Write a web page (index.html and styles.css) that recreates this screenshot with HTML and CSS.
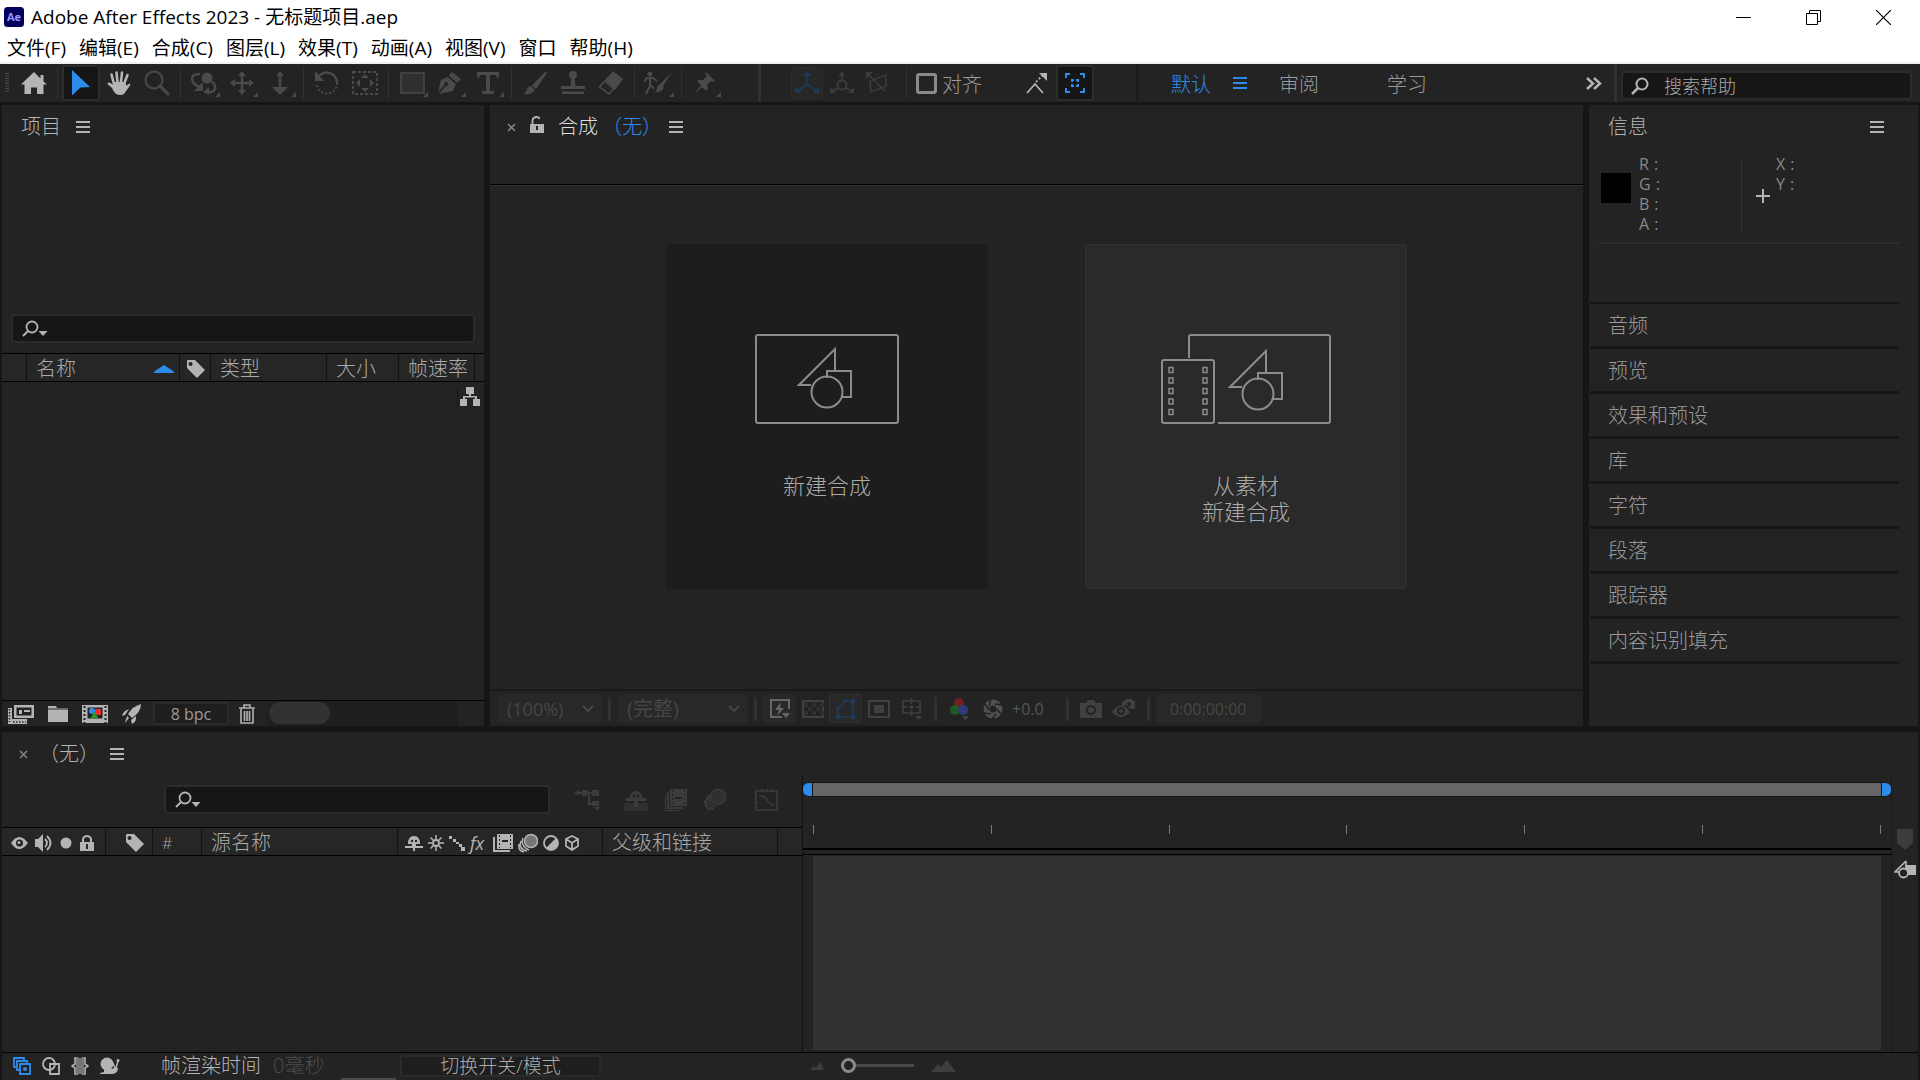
FILE: index.html
```html
<!DOCTYPE html>
<html lang="zh-CN">
<head>
<meta charset="utf-8">
<title>Adobe After Effects 2023 - 无标题项目.aep</title>
<link rel="stylesheet" href="styles.css">
</head>
<body>
<svg class="defs" aria-hidden="true">
  <symbol id="i-menu" viewBox="0 0 14 12"><path d="M0 1h14M0 6h14M0 11h14" stroke="currentColor" stroke-width="2" fill="none"/></symbol>
  <symbol id="i-corner" viewBox="0 0 5 5"><path d="M5 0v5H0z" fill="currentColor"/></symbol>
  <symbol id="i-close" viewBox="0 0 9 9"><path d="M1 1l7 7M8 1L1 8" stroke="currentColor" stroke-width="1.4"/></symbol>
  <symbol id="i-find" viewBox="0 0 26 18"><circle cx="10" cy="7" r="5.500" fill="none" stroke="currentColor" stroke-width="1.8"/><path d="M6 11L1 16" stroke="currentColor" stroke-width="2"/><path d="M16.500 11h9l-4.500 5z" fill="currentColor"/></symbol>
  <symbol id="i-tag" viewBox="0 0 20 20"><path fill-rule="evenodd" d="M1 2q0-1 1-1h7l10 10-8 8L1 9zM4.500 3a2 2 0 1 0 .1 0z" fill="currentColor"/></symbol>
  <symbol id="i-chev" viewBox="0 0 12 8"><path d="M1 1l5 5 5-5" stroke="currentColor" stroke-width="2" fill="none"/></symbol>
  <symbol id="i-shapes" viewBox="0 0 56 62"><path d="M14 38H2L38 2v22M30 31v-7h24v26h-10" fill="none" stroke="currentColor" stroke-width="2"/><circle cx="30" cy="45" r="15.500" fill="none" stroke="currentColor" stroke-width="2"/></symbol>
</svg>
<div class="app">
  <header class="chrome">
    <div class="titlebar">
      <svg class="logo" viewBox="0 0 20 20"><rect width="20" height="20" rx="3.500" fill="#00005b"/><text x="10" y="14" text-anchor="middle" font-family="Open Sans, sans-serif" font-weight="700" font-size="11" fill="#9999ff">Ae</text></svg>
      <h1>Adobe After Effects 2023 - 无标题项目.aep</h1>
      <div class="winbtns">
        <button aria-label="最小化"><svg width="15" height="15"><path d="M0 7.500h15" stroke="#000"/></svg></button>
        <button aria-label="还原"><svg width="15" height="15"><path d="M.5 3.500h11v11H.5zM3.500 3.500v-3h11v11h-3" fill="none" stroke="#000"/></svg></button>
        <button aria-label="关闭"><svg width="15" height="15"><path d="M0 0l15 15M15 0L0 15" stroke="#000" stroke-width="1.200"/></svg></button>
      </div>
    </div>
    <nav class="menubar">
      <button>文件(F)</button><button>编辑(E)</button><button>合成(C)</button><button>图层(L)</button><button>效果(T)</button><button>动画(A)</button><button>视图(V)</button><button>窗口</button><button>帮助(H)</button>
    </nav>
  </header>

  <div class="toolbar">
    <svg class="grip" viewBox="0 0 4 20"><path d="M2 0v20" stroke="#4a4a4a" stroke-width="4" stroke-dasharray="1 1.500"/></svg>
    <button class="tool lit" aria-label="主页"><svg width="26" height="24"><path d="M13 1L0 13.500h3.500V23h6.500v-6.500h6V23h6.500v-9.500H26L22.500 10.500V4h-3v3.500z" fill="currentColor"/></svg></button>
    <i class="sep"></i>
    <button class="tool on" aria-label="选取工具"><svg width="20" height="26"><path d="M1 0l18 17-9.500.5L1 25.500z" fill="#2d8ceb"/></svg></button>
    <button class="tool lit" aria-label="手形工具"><svg width="24" height="26"><path d="M7 14L4.500 4.500M10.500 12L9.500 2.500M14 12l1-9.500M17 14l3.500-9" stroke="currentColor" stroke-width="2.600" stroke-linecap="round"/><path d="M6 12h12l1.500 3.500 3-2q1.500.5.5 2L17 24q-4 2-8 0-3-3-4-6L.5 14q0-2 2-1.500L6.500 15z" fill="currentColor"/></svg></button>
    <button class="tool" aria-label="缩放工具"><svg width="26" height="26"><circle cx="10" cy="10" r="8.500" fill="none" stroke="currentColor" stroke-width="2"/><path d="M16 16l8 8" stroke="currentColor" stroke-width="3" stroke-linecap="round"/></svg></button>
    <i class="sep"></i>
    <button class="tool" aria-label="绕光标旋转工具"><svg width="28" height="24"><circle cx="17" cy="7" r="5.500" fill="currentColor"/><path d="M10 3Q2 3 2 8q1 6 8 8M21 10q5 3 4 8-2 4-8 3" fill="none" stroke="currentColor" stroke-width="2.500"/><path d="M13 11v9H4zM19 16l-6 5 6 3z" fill="currentColor"/></svg><svg class="corner"><use href="#i-corner"/></svg></button>
    <button class="tool" aria-label="平移工具"><svg width="24" height="24"><path d="M12 3v18M3 12h18" stroke="currentColor" stroke-width="2.400"/><path d="M12 0l4 5H8zM12 24l4-5H8zM0 12l5-4v8zM24 12l-5-4v8z" fill="currentColor"/></svg><svg class="corner"><use href="#i-corner"/></svg></button>
    <button class="tool" aria-label="推拉工具"><svg width="18" height="24"><path d="M9 2v18" stroke="currentColor" stroke-width="2.600"/><path d="M9 0l4 5H5zM9 24l8-8H1z" fill="currentColor"/></svg><svg class="corner"><use href="#i-corner"/></svg></button>
    <i class="sep"></i>
    <button class="tool" aria-label="旋转工具"><svg width="26" height="26"><path d="M4 7q7-7 14-3 5 3 5 9" fill="none" stroke="currentColor" stroke-width="2.500"/><path d="M23 13a10 10 0 0 1-20 1" fill="none" stroke="currentColor" stroke-width="2" stroke-dasharray="2 2"/><path d="M1 1v10h9z" fill="currentColor"/></svg></button>
    <button class="tool" aria-label="锚点工具"><svg width="26" height="24"><rect x="1" y="1" width="24" height="22" fill="none" stroke="currentColor" stroke-width="2" stroke-dasharray="3 2"/><path d="M13 3l4 4H9zM13 21l4-4H9zM4 12l4-4v8zM22 12l-4-4v8z" fill="currentColor"/></svg></button>
    <i class="sep"></i>
    <button class="tool" aria-label="矩形工具"><svg width="25" height="22"><rect x="1" y="1" width="23" height="20" fill="#303030" stroke="currentColor" stroke-width="1.500"/></svg><svg class="corner"><use href="#i-corner"/></svg></button>
    <button class="tool" aria-label="钢笔工具"><svg width="26" height="24"><path d="M15 1l9 7-3.500 4-9-7.500z" fill="currentColor"/><path fill-rule="evenodd" d="M10.500 6l8.500 7-3 7L2 23l7-8a2 2 0 1 0-1.500-1L1 21 4 9z" fill="currentColor"/></svg><svg class="corner"><use href="#i-corner"/></svg></button>
    <button class="tool" aria-label="横排文字工具"><svg width="22" height="22"><path d="M0 0h22v6h-2l-1-3h-6v16h4v3H5v-3h4V3H3L2 6H0z" fill="currentColor"/></svg><svg class="corner"><use href="#i-corner"/></svg></button>
    <i class="sep"></i>
    <button class="tool" aria-label="画笔工具"><svg width="26" height="24"><path d="M24.500.5q1 0 0 2L14 18l-4-3.500L23 1q1-1 1.500-.5zM9 15l4 4q-2 5-12 4 3-1 4-5 1-3 4-3z" fill="currentColor"/></svg></button>
    <button class="tool" aria-label="仿制图章工具"><svg width="26" height="24"><circle cx="13" cy="4" r="4" fill="currentColor"/><path d="M11.500 6h3l1 9H25v3H1v-3h9.500zM2 20.500h22V23H2z" fill="currentColor"/></svg></button>
    <button class="tool" aria-label="橡皮擦工具"><svg width="26" height="24"><path d="M15 0l10 8-8 11L7 9z" fill="currentColor"/><path d="M7 10l8.500 8-4.500 5L1.500 16z" fill="none" stroke="currentColor" stroke-width="1.600"/></svg></button>
    <i class="sep"></i>
    <button class="tool" aria-label="Roto 笔刷工具"><svg width="28" height="24"><circle cx="6" cy="3" r="2.500" fill="currentColor"/><path d="M0 11l3-4h6l4 3M6 7v8l-4 8M7 14l3 4" fill="none" stroke="currentColor" stroke-width="2"/><path d="M28 1L19 15l-3-2zM16 13l4 3q-2 6-9 5 2-1 2-5z" fill="currentColor"/></svg><svg class="corner"><use href="#i-corner"/></svg></button>
    <i class="sep"></i>
    <button class="tool" aria-label="人偶位置控点工具"><svg width="24" height="24"><path d="M13 1l9 9-2 1-2-1-4 4q2 4-1 6l-4-4-8 7 7-9-4-4q3-2 6-1l4-4-2-2z" fill="currentColor"/></svg><svg class="corner"><use href="#i-corner"/></svg></button>
    <i class="sep wide first"></i>
    <div class="axes">
      <button class="tool axis boxed" aria-label="本地轴模式"><svg width="26" height="24"><path d="M13 2v11L2 21M13 13l11 8" fill="none" stroke="currentColor" stroke-width="1.800"/><path d="M13 0l4 5H9zM1 16l6 6H1zM25 16l-6 6h6z" fill="currentColor"/></svg></button>
      <button class="tool axis" aria-label="世界轴模式"><svg width="26" height="24"><circle cx="13" cy="14" r="4.500" fill="none" stroke="currentColor" stroke-width="2"/><path d="M13 2v7M9 17l-7 4M17 17l7 4" stroke="currentColor" stroke-width="1.800"/><path d="M13 0l3.500 5h-7zM1 16l6 6H1zM25 16l-6 6h6z" fill="currentColor"/></svg></button>
      <button class="tool axis" aria-label="视图轴模式"><svg width="22" height="22"><path d="M4 9l16-6v11L5 20z M2 2l17 17" fill="none" stroke="currentColor" stroke-width="1.500"/><path d="M0 0h7L0 7z" fill="currentColor"/></svg></button>
    </div>
    <i class="sep"></i>
    <label class="snap"><input type="checkbox"><span>对齐</span></label>
    <button class="tool lit snapedge" aria-label="对齐选项"><svg width="22" height="22"><path d="M1 21l8-9 8 9" fill="none" stroke="currentColor" stroke-width="1.800"/><path d="M10 10l7-7" stroke="currentColor" stroke-width="1.800" stroke-dasharray="2 2"/><path d="M13 1h8v8z" fill="currentColor"/></svg></button>
    <button class="tool on" aria-label="折叠变换对齐"><svg width="20" height="20"><path d="M1 5V1h4M15 1h4v4M19 15v4h-4M5 19H1v-4M7 9V7h2M11 7h2v2M13 11v2h-2M9 13H7v-2" fill="none" stroke="#2d8ceb" stroke-width="2"/></svg></button>
    <i class="sep dark"></i>
    <nav class="spaces">
      <button class="active">默认</button><button class="active spacemenu" aria-label="工作区菜单"><svg class="ham"><use href="#i-menu"/></svg></button>
      <button>审阅</button><button class="learn">学习</button>
    </nav>
    <button class="more" aria-label="更多"><svg width="16" height="13"><path d="M1 1l6 5.500L1 12M8 1l6 5.500L8 12" fill="none" stroke="currentColor" stroke-width="2.500"/></svg></button>
    <i class="sep wide"></i>
    <label class="field help"><svg width="18" height="18"><circle cx="11" cy="7" r="5.500" fill="none" stroke="currentColor" stroke-width="2"/><path d="M7 11l-6 6" stroke="currentColor" stroke-width="2.500"/></svg><input type="text" placeholder="搜索帮助" aria-label="搜索帮助"></label>
  </div>

  <main class="workspace">
    <section class="panel project">
      <div class="tabs"><h2>项目</h2><button aria-label="面板菜单"><svg class="ham"><use href="#i-menu"/></svg></button></div>
      <div class="preview"></div>
      <label class="field find"><svg width="26" height="18"><use href="#i-find"/></svg><input type="text" aria-label="搜索项目"></label>
      <table class="cols">
        <tr><th class="c-handle"></th><th class="c-name"><span>名称<svg width="20" height="8"><path d="M0 8q0-1 1-2l9-6 9 6q1 1 1 2z" fill="#2d8ceb"/></svg></span></th><th class="c-tag"><svg width="20" height="20"><use href="#i-tag"/></svg></th><th class="c-type">类型</th><th class="c-size">大小</th><th class="c-rate">帧速率</th><th></th></tr>
      </table>
      <div class="bin"><button aria-label="项目流程图"><svg width="20" height="19"><path d="M6 0h8v7h-3v2h6v3h3v7h-7v-7h2v-1.500H5V12h2v7H0v-7h3V9h6V7H6z" fill="currentColor"/></svg></button></div>
      <div class="binbar">
        <button aria-label="解释素材"><svg width="26" height="20"><path fill-rule="evenodd" d="M6 1h20v13H6zM8.500 3.500v8h15v-8z" fill="currentColor"/><path d="M11 6h3v4h-3zM16 6h6v2h-6zM0 4h4v11h15v5H0z" fill="currentColor"/><path d="M1.500 5v13M5 18h13" stroke="#232323" stroke-dasharray="1.500 1.500" stroke-width="1.500"/></svg></button>
        <button aria-label="新建文件夹"><svg width="20" height="18"><path d="M0 1h8l1 2h11v14H0z" fill="currentColor"/><path d="M0 4h20" stroke="#232323"/></svg></button>
        <button aria-label="新建合成"><svg width="26" height="20"><path d="M0 1h26v18H0z" fill="currentColor"/><path d="M2.500 2v17M23.500 2v17" stroke="#232323" stroke-width="2" stroke-dasharray="2 2"/><path d="M5.500 3.500h15v11h-15z" fill="#232323"/><circle cx="10" cy="7" r="3" fill="#2d8ceb"/><path d="M13 5h6v6h-6z" fill="#f03030"/><path d="M12.500 8l4 6h-8z" fill="#22a020"/></svg></button>
        <button aria-label="项目设置"><svg width="20" height="20"><path d="M19 0q0 8-9 14l-4-4Q11 2 19 0zM7 5l-4 6-3 1q1-5 7-7zM14 12q1 5-4 8l-1-4zM5 12l2 2-4 5z" fill="currentColor"/></svg></button>
        <button class="bpc">8 bpc</button>
        <button aria-label="删除"><svg width="16" height="20"><path d="M0 4h16M5 4V1h6v3M2 5v14h12V5M5.500 7v10M8 7v10M10.500 7v10" fill="none" stroke="currentColor" stroke-width="1.600"/></svg></button>
        <div class="hscroll"><i></i></div>
      </div>
    </section>

    <section class="panel comp">
      <div class="tabs"><button class="x" aria-label="关闭"><svg width="9" height="9"><use href="#i-close"/></svg></button><button class="lock" aria-label="锁定"><svg width="14" height="18"><path d="M2.500 9V4q1-3 4-3 2.500 0 3 2" fill="none" stroke="currentColor" stroke-width="1.800"/><path fill-rule="evenodd" d="M0 8h14v9H0zM6 10v4h2v-4z" fill="currentColor"/></svg></button><h2>合成<b>（无）</b></h2><button aria-label="面板菜单"><svg class="ham"><use href="#i-menu"/></svg></button></div>
      <div class="stage">
        <button class="card"><svg width="144" height="90" class="art"><rect x="1" y="1" width="142" height="88" rx="2" fill="none" stroke="currentColor" stroke-width="2"/><svg x="42" y="13" width="56" height="62"><use href="#i-shapes"/></svg></svg><span>新建合成</span></button>
        <button class="card soft"><svg width="170" height="90" class="art"><path d="M28 24V3q0-2 2-2h137q2 0 2 2v84q0 2-2 2H57" fill="none" stroke="currentColor" stroke-width="2"/><rect x="1" y="26" width="52" height="63" rx="2" fill="none" stroke="currentColor" stroke-width="2"/><path d="M8 33.500h4v5H8zM8 44h4v5H8zM8 54.500h4v5H8zM8 65h4v5H8zM8 75.500h4v5H8zM42 33.500h4v5h-4zM42 44h4v5h-4zM42 54.500h4v5h-4zM42 65h4v5h-4zM42 75.500h4v5h-4z" fill="none" stroke="currentColor" stroke-width="1.500"/><svg x="67" y="15" width="56" height="62"><use href="#i-shapes"/></svg></svg><span>从素材<br>新建合成</span></button>
      </div>
      <div class="viewbar">
        <div class="pick zoom"><select aria-label="放大率"><option>(100%)</option></select><svg width="12" height="8"><use href="#i-chev"/></svg></div>
        <i class="bar"></i>
        <div class="pick res"><select aria-label="分辨率"><option>(完整)</option></select><svg width="12" height="8"><use href="#i-chev"/></svg></div>
        <i class="bar"></i>
        <button class="vb fill bright" aria-label="快速预览"><svg width="22" height="22"><path d="M20 11V2H2v17h11" fill="none" stroke="currentColor" stroke-width="2"/><path d="M12 4l-6 8h4l-2 6 7-8h-4zM13 15h8l-4 5z" fill="currentColor"/></svg></button>
        <button class="vb" aria-label="透明网格"><svg width="22" height="18"><rect x="1" y="1" width="20" height="16" fill="none" stroke="currentColor" stroke-width="2"/><path d="M2 5h20M2 13h20M6 9h14" stroke="#303030" stroke-width="4" stroke-dasharray="4 4"/></svg></button>
        <button class="vb fill blue" aria-label="蒙版可见性"><svg width="22" height="20"><path d="M3 18V9l7-7h8v16z" fill="none" stroke="currentColor" stroke-width="1.500"/><path d="M1 16h4v4H1zM16 16h4v4h-4zM16 0h4v4h-4zM8 0h4v3H8zM1 8h3v3H1z" fill="currentColor"/></svg></button>
        <button class="vb" aria-label="目标区域"><svg width="22" height="18"><rect x="1" y="1" width="20" height="16" fill="none" stroke="currentColor" stroke-width="2"/><path d="M6 5h10v8H6z" fill="currentColor"/></svg></button>
        <button class="vb" aria-label="网格和参考线"><svg width="22" height="22"><path d="M2 3h17v12H2zM0 9h6M15 9h6M10.500 0v6M10.500 12v6M8 9h5M10.500 7v4" fill="none" stroke="currentColor" stroke-width="1.600"/><path d="M14 18h7l-3.500 4z" fill="currentColor"/></svg></button>
        <i class="bar"></i>
        <button class="vb rgb" aria-label="显示通道"><svg width="20" height="22"><circle cx="9" cy="5" r="5" fill="#702020"/><circle cx="5" cy="12" r="5" fill="#205a24"/><circle cx="13" cy="12" r="5" fill="#303a78"/><path d="M12 18h7l-3.500 4z" fill="#444"/></svg></button>
        <button class="vb shutter" aria-label="重置曝光度"><svg width="20" height="20"><circle cx="10" cy="10" r="6.500" fill="none" stroke="currentColor" stroke-width="6"/><path d="M8 0l-2 7M19 6l-7-1M18 15l-4-5M9 20l4-5M1 14l7 1M2 5l4 6" stroke="#232323" stroke-width="1.500"/></svg></button>
        <span class="expo">+0.0</span>
        <i class="bar"></i>
        <button class="vb" aria-label="拍摄快照"><svg width="22" height="18"><path fill-rule="evenodd" d="M0 3h6l2-3h6l2 3h6v15H0zM11 5a5 5 0 1 0 .1 0z" fill="currentColor"/><circle cx="11" cy="10" r="3" fill="currentColor"/></svg></button>
        <button class="vb" aria-label="显示快照"><svg width="24" height="20"><path d="M0 13q9-13 18 0-9 10-18 0z" fill="currentColor"/><circle cx="9" cy="12" r="4" fill="#232323"/><circle cx="9" cy="12" r="2" fill="currentColor"/><path d="M10 2h3l1-2h6l1 2h2v8h-4l-5-4-4 1z" fill="currentColor"/><circle cx="17" cy="5" r="2" fill="#232323"/></svg></button>
        <i class="bar"></i>
        <button class="time">0:00:00:00</button>
      </div>
    </section>

    <aside class="panel info">
      <div class="tabs"><h2>信息</h2><button aria-label="面板菜单"><svg class="ham"><use href="#i-menu"/></svg></button></div>
      <div class="readout">
        <i class="swatch"></i>
        <div class="rgba"><p><span>R</span><span>:</span></p><p><span>G</span><span>:</span></p><p><span>B</span><span>:</span></p><p><span>A</span><span>:</span></p></div>
        <div class="pos"><svg width="14" height="14"><path d="M0 7h14M7 0v14" stroke="currentColor" stroke-width="2"/></svg><div><p><span>X</span><span>:</span></p><p><span>Y</span><span>:</span></p></div></div>
      </div>
      <nav class="stack"><button>音频</button><button>预览</button><button>效果和预设</button><button>库</button><button>字符</button><button>段落</button><button>跟踪器</button><button>内容识别填充</button></nav>
    </aside>

    <section class="panel timeline">
      <div class="tabs"><button class="x" aria-label="关闭"><svg width="9" height="9"><use href="#i-close"/></svg></button><h2>（无）</h2><button aria-label="面板菜单"><svg class="ham"><use href="#i-menu"/></svg></button></div>
      <div class="tracks">
        <div class="layers">
          <div class="layertools">
            <label class="field find"><svg width="26" height="18"><use href="#i-find"/></svg><input type="text" aria-label="搜索图层"></label>
            <button class="mini" aria-label="合成微型流程图"><svg width="26" height="22"><path d="M0 4l5-3v2h3V1h6v2h4V1h7v6h-7V5h-2v9h2v-2h7v5h-7v-1h-4V5h-1v2H8V5H5v2zM20 18h6l-3 4z" fill="currentColor"/></svg></button>
            <button aria-label="隐藏消隐图层"><svg width="24" height="22"><path d="M0 14h24v8H0z" fill="#303030"/><path d="M6 9q0-7 6-7t6 7h4v3h-8v6h-4v-6H2V9z" fill="currentColor"/><circle cx="10" cy="7" r="1.500" fill="#232323"/><circle cx="14" cy="7" r="1.500" fill="#232323"/></svg></button>
            <button aria-label="帧混合"><svg width="22" height="22"><path d="M5 0h17v17H5zM2 3h2v15h14v2H2zM0 6h1v15h13v1H0z" fill="currentColor"/><path d="M7.500 1v16M19.500 1v16" stroke="#232323" stroke-dasharray="2 2"/><path d="M10 8h7v2h-7z" fill="#232323"/></svg></button>
            <button aria-label="运动模糊"><svg width="22" height="22"><circle cx="14" cy="8" r="7.500" fill="#303030" stroke="currentColor" stroke-width="1.500"/><path d="M5 5q-3 9 7 13M3 8q-3 9 7 12M1 11q-1 8 6 10" fill="none" stroke="currentColor" stroke-width="1.500"/></svg></button>
            <button class="graph" aria-label="图表编辑器"><svg width="24" height="22"><path d="M2 2h21v19H2z" fill="none" stroke="currentColor" stroke-width="1.600"/><path d="M5 7h2q4 0 6 4t7 5M8 0v3M13 0v3M18 0v3M0 9h3M0 14h3" fill="none" stroke="currentColor" stroke-width="1.600"/></svg></button>
          </div>
          <table class="cols layercols">
            <tr><th class="l-av"><span><svg width="17" height="14"><path d="M0 7q8-12 17 0-9 12-17 0z" fill="currentColor"/><circle cx="8.500" cy="7" r="3.500" fill="#232323"/><circle cx="8" cy="6.500" r="1.500" fill="currentColor"/></svg><svg width="18" height="18"><path d="M0 5h3l5-5v18l-5-5H0z" fill="currentColor"/><path d="M10 5q4 4 0 8M12 2q7 7 0 14" fill="none" stroke="currentColor" stroke-width="1.800"/></svg><svg width="13" height="12"><circle cx="6" cy="6" r="5.500" fill="currentColor"/></svg><svg width="14" height="16"><path d="M3 8V4q1-3 4-3t4 3v4" fill="none" stroke="currentColor" stroke-width="2"/><path fill-rule="evenodd" d="M0 7h14v9H0zM6 9v5h2V9z" fill="currentColor"/></svg></span></th>
            <th class="l-tag"><svg width="20" height="20"><use href="#i-tag"/></svg></th><th class="l-num">#</th><th class="l-src">源名称</th>
            <th class="l-sw"><span>
              <svg width="18" height="16"><path d="M3 9q0-8 6-8t6 8h-4v2h7v2h-8v3H8v-3H0v-2h7V9z" fill="currentColor"/><circle cx="7" cy="6" r="1.200" fill="#232323"/><circle cx="11" cy="6" r="1.200" fill="#232323"/></svg>
              <svg width="16" height="16"><circle cx="8" cy="8" r="3" fill="none" stroke="currentColor" stroke-width="1.800"/><path d="M8 0v4M8 12v4M0 8h4M12 8h4M2.500 2.500l3 3M10.500 10.500l3 3M13.500 2.500l-3 3M5.500 10.500l-3 3" stroke="currentColor" stroke-width="1.500"/></svg>
              <svg width="16" height="16"><path d="M0 1h3v3H0zM4 4h3v3H4zM7 7h3v2H7zM10 9h3v3h-3zM12 12h4v4h-4z" fill="currentColor"/></svg>
              <em>fx</em>
              <svg width="20" height="18"><path d="M4 0h16v15H4zM0 3h2v13h15v2H0z" fill="currentColor"/><path d="M6.500 1v13M17.500 1v13" stroke="#232323" stroke-dasharray="2 2"/><path d="M9 6h6v2H9z" fill="#232323"/></svg>
              <svg width="20" height="20"><circle cx="13" cy="8" r="6.500" fill="#777" stroke="currentColor" stroke-width="1.500"/><path d="M5 5q-3 8 6 12M3 8q-3 8 6 10M1 11q-1 7 5 8" fill="none" stroke="currentColor" stroke-width="1.500"/></svg>
              <svg width="16" height="16"><circle cx="8" cy="8" r="7" fill="none" stroke="currentColor" stroke-width="1.800"/><path d="M13 3A7 7 0 0 1 3 13z" fill="currentColor"/></svg>
              <svg width="16" height="16"><path d="M8 1l6 3v7l-6 4-6-4V4zM2 4l6 4 6-4M8 8v7" fill="none" stroke="currentColor" stroke-width="1.800"/></svg></span></th>
            <th class="l-parent">父级和链接</th><th></th></tr>
          </table>
          <div class="layerlist"></div>
        </div>
        <div class="ruler">
          <div class="workarea"><i></i></div>
          <div class="ticks"><div class="scale"><i></i><i></i><i></i><i></i><i></i><i></i><i></i></div></div>
          <div class="canvas"><i></i></div>
        </div>
        <div class="side"><svg width="16" height="21"><path d="M0 0h16v14l-8 7-8-7z" fill="#3c3c3c"/></svg><svg width="22" height="19"><path d="M11 5h11v10h-8z" fill="currentColor"/><path d="M12 1v9M12 1L1 12h5" fill="none" stroke="currentColor" stroke-width="1.600"/><circle cx="9.500" cy="13" r="4.500" fill="#232323" stroke="currentColor" stroke-width="1.800"/></svg></div>
      </div>
      <div class="status">
        <div class="toggles">
          <button class="blue" aria-label="图层开关"><svg width="18" height="18"><path d="M11 4V1H1v9h3M14 7V4H4v9h3M7 7h10v10H7z" fill="none" stroke="currentColor" stroke-width="1.800"/><circle cx="12" cy="12" r="2" fill="currentColor"/></svg></button>
          <button aria-label="转换控制"><svg width="18" height="18"><circle cx="7" cy="7" r="6" fill="none" stroke="currentColor" stroke-width="1.800"/><path d="M8 7h9v10H8z" fill="none" stroke="currentColor" stroke-width="1.800"/></svg></button>
          <button aria-label="入点出点"><svg width="18" height="18"><path d="M7 1H4v6L1 9l3 2v6h3M11 1h3v6l3 2-3 2v6h-3" fill="none" stroke="currentColor" stroke-width="1.600"/><path d="M5 1h8v16H5z" fill="#777"/></svg></button>
          <button aria-label="渲染时间"><svg width="20" height="18"><circle cx="7" cy="7" r="6.500" fill="currentColor"/><path d="M4 12h8l3-2 3 1q0 5-5 6H0v-1l4-1z" fill="currentColor"/><path d="M16 11l2-7M15 11l-2-5" stroke="currentColor" stroke-width="1.500"/><circle cx="18" cy="3.500" r="1.500" fill="currentColor"/></svg></button>
        </div>
        <span class="rt">帧渲染时间</span><span class="ms">0毫秒</span>
        <button class="switch">切换开关/模式</button>
        <div class="zoomer"><svg width="14" height="8"><path d="M0 8l4-4 2 2 4-6 4 8z" fill="#3e3e3e"/></svg><input type="range" min="0" max="100" value="0" aria-label="时间缩放"><svg width="26" height="12"><path d="M0 12l7-8 3 3L16 0l9 12z" fill="#3e3e3e"/></svg></div>
      </div>
      <i class="thumb"></i>
    </section>
  </main>
</div>
</body>
</html>
```
FILE: styles.css
```css
* { box-sizing: border-box; }
body {
  margin: 0;
  background: #161616;
  color: #b4b4b4;
  font: 300 20px/24px "Open Sans", "Noto Sans CJK SC", sans-serif;
}
button, input, select { font: inherit; color: inherit; }
button { padding: 0; border: 0; background: none; display: flex; align-items: center; justify-content: center; }
svg { display: block; flex: none; }
h1, h2, p { margin: 0; font-size: inherit; font-weight: inherit; }
i, em, b { font-weight: inherit; }
.defs { position: absolute; width: 0; height: 0; }
.app { display: flex; flex-direction: column; min-height: 100vh; }

/* window title and menus */
.chrome { background: #fff; color: #000; border-bottom: 2px solid #f0f0f0; font-size: 19px; font-weight: 400; }
.titlebar { display: flex; align-items: center; height: 34px; padding: 0 2px 0 4px; }
.logo { width: 20px; height: 20px; margin-right: 7px; }
.winbtns { display: flex; margin-left: auto; }
.winbtns button { width: 70px; height: 34px; }
.menubar { display: flex; gap: 13px; height: 28px; padding: 0 7px; }

/* toolbar */
.toolbar { display: flex; align-items: center; height: 38px; padding: 0 8px 0 5px; background: #232323; color: #4a4a4a; }
.grip { width: 4px; height: 20px; margin-right: 6px; }
.tool { position: relative; width: 38px; height: 36px; flex: none; border-radius: 3px; }
.tool.lit { color: #b4b4b4; }
.tool.on { background: #161616; border: 2px solid #2c2c2c; }
.corner { position: absolute; right: 3px; bottom: 4px; width: 5px; height: 5px; }
.sep { flex: none; width: 1px; height: 32px; margin: 0 4px; background: #303030; }
.sep.wide { width: 3px; height: 38px; }
.sep.first { margin-left: 34px; }
.sep.dark { width: 2px; height: 38px; margin: 0 4px 0 42px; background: #1b1b1b; }
.axes { display: flex; gap: 3px; margin-left: 26px; margin-right: 9px; }
.axis { width: 32px; height: 32px; color: #3c3c3c; }
.axis.boxed { background: #272727; border: 1px solid #2c2c2c; color: #1d3b5a; }
.snap { display: flex; align-items: center; gap: 5px; margin-left: 5px; color: #9a9a9a; }
.snap span { padding-top: 3px; }
.snap input { appearance: none; width: 21px; height: 21px; margin: 0; border: 3px solid #8a8a8a; border-radius: 3px; }
.snapedge { margin-left: 36px; }
.spaces { display: flex; align-items: center; flex: 1; color: #9a9a9a; margin-left: 29px; padding-top: 3px; }
.spaces .active { color: #2d8ceb; }
.spaces .spacemenu { margin: 0 32px 3px 22px; }
.spaces .learn { margin-left: 68px; }
.ham { width: 14px; height: 12px; }
.more { margin-right: 8px; color: #b4b4b4; }
.field { display: flex; align-items: center; background: #161616; border: 2px solid #2b2b2b; border-radius: 4px; height: 29px; }
.field input { flex: 1; min-width: 0; border: 0; padding: 0; outline: 0; background: none; height: 24px; }
.help { width: 291px; margin-top: 5px; padding-left: 8px; gap: 15px; color: #b4b4b4; font-size: 18px; }
.help input::placeholder { color: #aaa; opacity: 1; }

/* panels */
.workspace {
  flex: 1; display: grid; gap: 6px; padding: 3px 2px 0;
  grid-template-columns: 482px minmax(0, 1fr) 329px;
  grid-template-rows: minmax(560px, 621fr) minmax(300px, 348fr);
}
.panel { display: flex; flex-direction: column; background: #232323; min-width: 0; }
.tabs { display: flex; align-items: center; flex: none; height: 44px; }
.tabs .x { color: #8a8a8a; }

.project .tabs { padding-left: 19px; gap: 15px; }
.project .preview { height: 165px; }
.project .field { margin: 0 9px; padding-left: 9px; }
.cols { width: 100%; margin-top: 10px; height: 29px; table-layout: fixed; border-collapse: collapse; border-top: 1px solid #000; border-bottom: 1px solid #000; background: #262626; color: #aaa; }
.cols th { padding: 2px 0 0 9px; font-weight: inherit; text-align: left; white-space: nowrap; box-shadow: inset -1px 0 #121212; }
.cols th:last-child { box-shadow: none; padding: 0; }
.cols span { display: flex; align-items: center; }
.c-handle { width: 25px; }
.c-name { width: 153px; }
.c-name span { justify-content: space-between; padding-right: 6px; }
.cols .c-tag { width: 31px; padding-left: 6px; color: #b4b4b4; }
.c-type { width: 116px; }
.c-size { width: 72px; }
.c-rate { width: 76px; }
.bin { flex: 1; display: flex; justify-content: flex-end; align-items: flex-start; padding-top: 5px; }
.bin button { padding: 0 4px 0 2px; border-left: 1px solid #161616; }
.binbar { display: flex; align-items: center; height: 26px; border-top: 1px solid #000; padding-left: 6px; }
.binbar button { margin-right: 14px; }
.binbar .bpc { width: 76px; height: 23px; margin: 0 10px 0 -3px; border: 2px solid #2a2a2a; border-radius: 3px; background: #1e1e1e; color: #9a9a9a; font-size: 16px; font-weight: 400; }
.binbar .bpc + button { margin-right: 12px; }
.hscroll { width: 191px; height: 25px; padding: 1px 2px; background: #1f1f1f; }
.hscroll i { display: block; width: 61px; height: 22px; border-radius: 11px; background: #323232; }

.comp .tabs { padding-left: 17px; height: 79px; padding-bottom: 35px; }
.comp .lock { margin: 0 14px 4px 14px; color: #b4b4b4; }
.comp h2 { color: #ddd; margin-right: 7px; }
.comp h2 b { color: #2d8ceb; margin-left: 4px; }
.stage { flex: 1; display: flex; justify-content: center; align-items: flex-start; gap: 97px; padding-top: 59px; border-top: 1px solid #000; box-shadow: inset 0 1px #303030; }
.card { flex-direction: column; justify-content: flex-start; width: 322px; height: 345px; padding-top: 90px; background: #1d1d1d; border-radius: 3px; font-size: 22px; line-height: 26px; color: #aaa; }
.card.soft { background: #2a2a2a; box-shadow: inset 0 0 0 1px #303030; }
.art { color: #8c8c8c; }
.card span { margin-top: 48px; }
.viewbar { display: flex; align-items: center; height: 37px; padding: 0 7px; border-top: 2px solid #191919; color: #404040; font-size: 18px; font-weight: 400; }
.pick { position: relative; height: 29px; background: #282828; border-radius: 3px; color: #464646; }
.pick select { appearance: none; width: 100%; height: 29px; padding: 0 10px; border: 0; background: none; opacity: 1; }
.pick svg { position: absolute; right: 8px; top: 11px; pointer-events: none; }
.pick.zoom { width: 105px; }
.pick.res { width: 131px; font-size: 20px; }
.bar { width: 3px; height: 24px; margin: 0 6px; background: #303030; }
.vb { width: 33px; height: 29px; border-radius: 3px; }
.vb.fill { background: #282828; }
.vb.blue { color: #1d3b5a; border: 1px solid #303030; }
.vb.bright { color: #666; }
.vb.shutter { color: #505050; }
.expo { margin: 0 16px 0 3px; font-size: 16px; color: #555; }
.time { width: 105px; height: 29px; background: #282828; border-radius: 3px; font-size: 16px; color: #464646; }

.info { padding-right: 19px; }
.info .tabs { justify-content: space-between; padding: 0 15px 0 19px; }
.readout { display: flex; height: 95px; margin-left: 9px; border-bottom: 2px solid #2d2d2d; font-size: 16px; font-weight: 400; color: #8a8a8a; }
.readout p { display: flex; gap: 5px; height: 20px; line-height: 12px; }
.swatch { width: 30px; height: 30px; margin: 24px 8px 0 3px; background: #000; }
.rgba { width: 103px; height: 75px; margin-top: 9px; border-right: 1px solid #333; }
.pos { display: flex; margin-top: 9px; padding-left: 14px; gap: 6px; }
.pos svg { margin-top: 31px; color: #b4b4b4; }
.stack { margin: 58px 0 0 1px; border-top: 2px solid #161616; color: #9a9a9a; }
.stack button { width: 100%; height: 45px; padding: 1px 0 0 18px; justify-content: flex-start; border-bottom: 3px solid #161616; }

/* timeline */
.timeline { grid-column: 1 / -1; position: relative; }
.timeline .tabs { padding-left: 17px; gap: 11px; }
.tracks { flex: 1; display: grid; grid-template-columns: 801px minmax(0, 1fr) 26px; }
.layers { display: flex; flex-direction: column; border-right: 1px solid #111; }
.layertools { display: flex; align-items: center; height: 51px; padding-left: 162px; padding-bottom: 4px; color: #3c3c3c; }
.layertools .field { width: 386px; padding-left: 9px; margin-right: 24px; color: #b4b4b4; }
.layertools button { margin-right: 17px; }
.layertools .mini { margin-right: 24px; }
.layertools .graph { margin-left: 11px; }
.layers .cols { margin: 0; }
.layercols svg, .layercols em { color: #b4b4b4; }
.l-av { width: 104px; }
.l-av span { gap: 7px; }
.l-tag { width: 47px; }
.cols .l-tag { padding-left: 19px; }
.l-num { width: 49px; font-size: 16px; }
.l-src { width: 196px; }
.l-sw { width: 205px; }
.l-sw span { gap: 5px; }
.cols .l-sw { padding-left: 7px; }
.l-sw em { width: 18px; font-size: 18px; font-weight: 400; }
.l-parent { width: 175px; }
.layerlist { flex: 1; }
.ruler { display: flex; flex-direction: column; padding-top: 6px; border-right: 1px solid #191919; }
.workarea { height: 15px; padding: 0 9px; background: #2d8ceb; border: solid #161616; border-width: 1px 0; border-radius: 6px; }
.workarea i { display: block; height: 13px; background: #666; border: solid #161616; border-width: 0 1px; }
.ticks { height: 53px; padding: 28px 10px 0; border-bottom: 2px solid #000; }
.scale { display: flex; justify-content: space-between; }
.scale i { width: 1px; height: 9px; background: #777; }
.canvas { flex: 1; margin-top: 4px; padding: 1px 10px 2px; border-top: 1px solid #000; display: flex; }
.canvas i { flex: 1; background: #323232; }
.side { padding-top: 53px; display: flex; flex-direction: column; gap: 10px; align-items: center; }
.status { display: flex; align-items: center; height: 28px; border-top: 1px solid #000; padding: 0 0 2px 11px; line-height: 22px; }
.toggles { display: flex; gap: 11px; width: 148px; }
.toggles .blue { color: #2d8ceb; }
.rt { width: 112px; }
.ms { width: 127px; color: #4e4e4e; }
.switch { width: 201px; height: 22px; border: 2px solid #2a2a2a; border-radius: 3px; background: #1e1e1e; color: #aaa; font-size: 19px; line-height: 18px; }
.zoomer { display: flex; align-items: center; gap: 17px; margin-left: 209px; }
.zoomer input { appearance: none; width: 73px; height: 3px; margin: 0; background: #4a4a4a; }
.zoomer input::-webkit-slider-thumb { appearance: none; width: 15px; height: 15px; border: 3px solid #8a8a8a; border-radius: 50%; background: #232323; }
.thumb { position: absolute; left: 339px; bottom: 0; width: 55px; height: 2px; background: #4a4a4a; }
```
